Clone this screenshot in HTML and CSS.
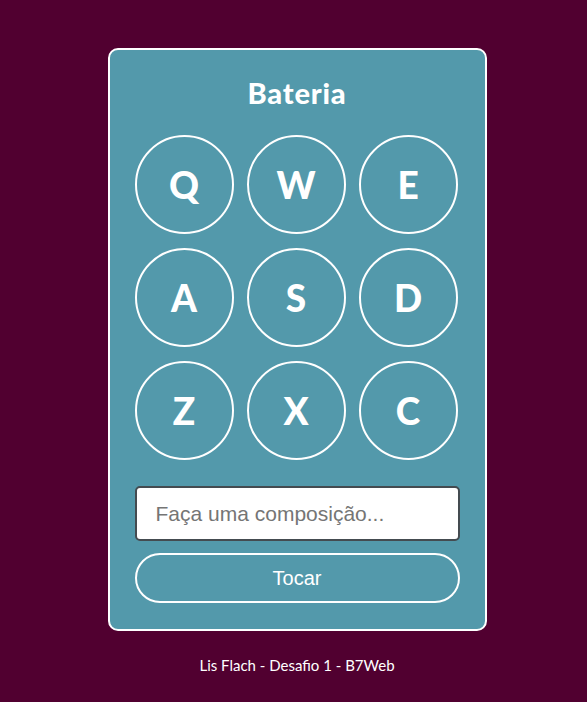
FILE: index.html
```html
<!DOCTYPE html>
<html lang="pt-BR">
<head>
<meta charset="utf-8">
<title>Bateria</title>
<link rel="stylesheet" href="styles.css">
</head>
<body>
<main class="page">
  <section class="card">
    <h1 class="title">Bateria</h1>
    <div class="keys">
      <div class="key">Q</div>
      <div class="key">W</div>
      <div class="key">E</div>
      <div class="key">A</div>
      <div class="key">S</div>
      <div class="key">D</div>
      <div class="key">Z</div>
      <div class="key">X</div>
      <div class="key">C</div>
    </div>
    <input class="compose" type="text" placeholder="Faça uma composição...">
    <button class="play" type="button">Tocar</button>
  </section>
  <footer class="footer">Lis Flach - Desafio 1 - B7Web</footer>
</main>
</body>
</html>
```
FILE: styles.css
```css
* { box-sizing: border-box; }
html, body { margin: 0; padding: 0; }
body {
  background: #510030;
  font-family: "Lato", "Open Sans", sans-serif;
  min-height: 702px;
}
.page {
  display: flex;
  flex-direction: column;
  align-items: center;
  padding: 48px 0 0 7px;
}
.card {
  width: 379px;
  background: #5399ab;
  border: 2px solid #ffffff;
  border-radius: 10px;
  padding: 0 25px 26px 25px;
  display: flex;
  flex-direction: column;
}
.title {
  margin: 0;
  height: 85px;
  padding-top: 27px;
  text-align: center;
  color: #ffffff;
  font-size: 29px;
  font-weight: 900;
  letter-spacing: 0.8px;
  line-height: 32px;
}
.keys {
  display: grid;
  grid-template-columns: repeat(3, 99px);
  column-gap: 13px;
  row-gap: 14px;
}
.key {
  width: 99px;
  height: 99px;
  border: 2px solid #ffffff;
  border-radius: 50%;
  display: flex;
  align-items: center;
  justify-content: center;
  color: #ffffff;
  font-size: 37px;
  font-weight: 900;
}
.compose {
  margin-top: 26px;
  height: 55px;
  width: 100%;
  border: 2px solid #444b50;
  border-radius: 5px;
  background: #ffffff;
  padding: 0 19px;
  font-family: "Liberation Sans", Arial, sans-serif;
  font-size: 21px;
  color: #333;
  outline: none;
}
.compose::placeholder { color: #757575; }
.play {
  margin-top: 12px;
  height: 50px;
  width: 100%;
  border: 2px solid #ffffff;
  border-radius: 25px;
  background: transparent;
  color: #ffffff;
  font-family: "Liberation Sans", Arial, sans-serif;
  font-size: 20px;
}
.footer {
  margin-top: 24px;
  color: #ffffff;
  font-size: 15px;
  line-height: 20px;
}
```
